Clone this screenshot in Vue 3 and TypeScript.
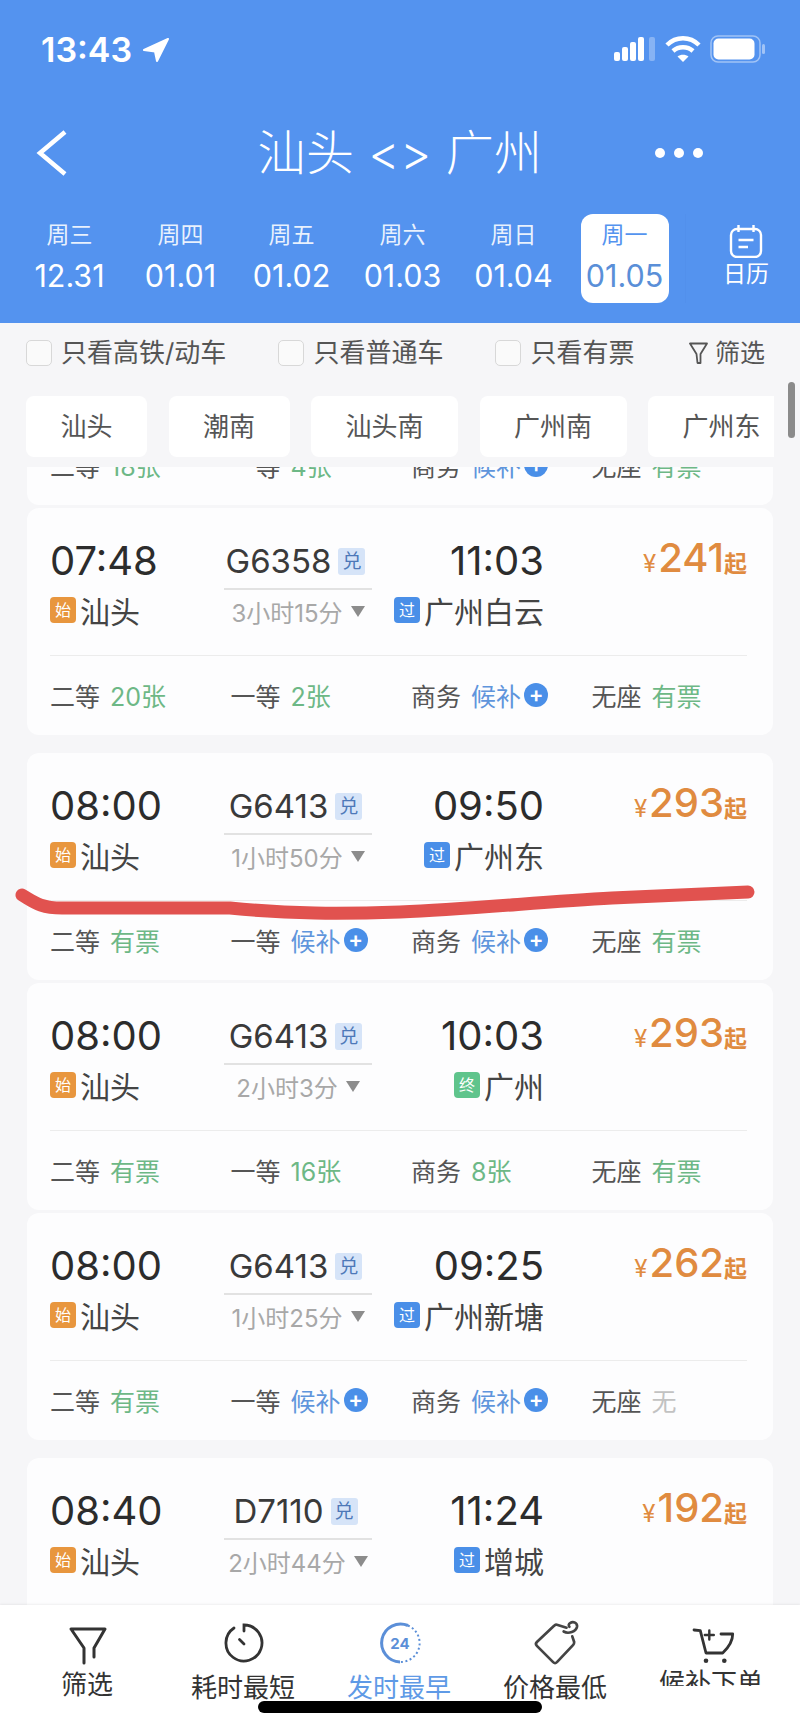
<template>
  <div class="page">
    <!-- Header -->
    <header class="header">
      <div class="status">
        <div class="clock">
          <span>13:43</span>
          <svg width="29" height="26" viewBox="0 0 29 26"><path d="M27 2 L3 13 L14 14.5 L16 24 Z" fill="#fff" stroke="#fff" stroke-width="2" stroke-linejoin="round" /></svg>
        </div>
        <div class="status-icons">
          <svg width="42" height="24" viewBox="0 0 42 24">
            <rect x="0" y="15" width="6" height="9" rx="2" fill="#fff" />
            <rect x="8" y="10" width="6" height="14" rx="2" fill="#fff" />
            <rect x="16" y="5" width="6" height="19" rx="2" fill="#fff" />
            <rect x="24" y="0" width="6" height="24" rx="2" fill="#fff" />
            <rect x="35" y="0" width="6" height="24" rx="2" fill="#fff" opacity="0.3" />
          </svg>
          <svg width="36" height="28" viewBox="0 0 36 28" fill="none" stroke="#fff" stroke-width="4.5">
            <path d="M2 10 C11 1 25 1 34 10" />
            <path d="M8 16 C13.5 11 22.5 11 28 16" />
            <path d="M18 27 L12.5 21.5 C15.5 19 20.5 19 23.5 21.5 Z" fill="#fff" stroke="none" />
          </svg>
          <svg width="56" height="28" viewBox="0 0 56 28">
            <rect x="1" y="1" width="49" height="26" rx="7" fill="none" stroke="#fff" stroke-opacity="0.45" stroke-width="1.5" />
            <rect x="3.5" y="3.5" width="41" height="21" rx="5" fill="#fff" />
            <rect x="52" y="9" width="3" height="10" rx="1.5" fill="#fff" opacity="0.45" />
          </svg>
        </div>
      </div>

      <nav class="nav">
        <svg class="back" width="32" height="46" viewBox="0 0 32 46" fill="none" stroke="#fff" stroke-width="4.5"><path d="M29 2 L4 23 L29 44" /></svg>
        <h1 class="title">汕头 &lt;&gt; 广州</h1>
        <div class="dots"><i /><i /><i /></div>
      </nav>

      <div class="dates">
        <div v-for="d in dates" :key="d.date" :class="['date', { active: d.active }]">
          <span class="week">{{ d.week }}</span>
          <span class="day">{{ d.date }}</span>
        </div>
        <div class="calendar">
          <svg width="34" height="33" viewBox="0 0 34 33" fill="none" stroke="#fff" stroke-width="2.4">
            <rect x="2" y="4" width="30" height="28" rx="6" />
            <path d="M9.5 0 V7 M24.5 0 V7 M9.5 15 H24.5 M9.5 22 H19" />
          </svg>
          <span>日历</span>
        </div>
      </div>
    </header>

    <!-- Filters -->
    <div class="filters">
      <label v-for="f in filters" :key="f" class="check"><i class="box" />{{ f }}</label>
      <div class="filter-btn">
        <svg width="19" height="23" viewBox="0 0 19 23" fill="none" stroke="#555" stroke-width="1.8"><path d="M1 1.5 H18 L11.5 12 V21 H8.5 L7.5 12 Z" stroke-linejoin="round" /></svg>
        <span>筛选</span>
      </div>
    </div>

    <div class="chips">
      <span v-for="c in chips" :key="c" class="chip">{{ c }}</span>
    </div>

    <!-- Train list -->
    <main class="list">
      <section class="card stub">
        <div class="seats">
          <div v-for="s in stubSeats" :key="s.name" class="seat">
            <span class="seat-name">{{ s.name }}</span>
            <span :class="['seat-val', s.tone]">{{ s.value }}</span>
            <i v-if="s.tone === 'wait'" class="plus">+</i>
          </div>
        </div>
      </section>

      <section v-for="t in trains" :key="t.id" :class="['card', { spaced: t.spaced }]">
        <div class="top">
          <div class="side">
            <div class="time">{{ t.dep }}</div>
            <div class="station"><i class="tag start">始</i>汕头</div>
          </div>
          <div class="mid">
            <div class="train"><span>{{ t.no }}</span><i class="swap">兑</i></div>
            <div class="line" />
            <div class="duration">{{ t.dur }}<i class="caret" /></div>
          </div>
          <div class="side right">
            <div class="time">{{ t.arr }}</div>
            <div class="station"><i :class="['tag', t.kind]">{{ t.kind === 'end' ? '终' : '过' }}</i>{{ t.to }}</div>
          </div>
          <div class="price"><small>¥</small><b>{{ t.price }}</b><em>起</em></div>
        </div>
        <div class="rule" />
        <div class="seats">
          <div v-for="s in t.seats" :key="s.name" class="seat">
            <span class="seat-name">{{ s.name }}</span>
            <span :class="['seat-val', s.tone]">{{ s.value }}</span>
            <i v-if="s.tone === 'wait'" class="plus">+</i>
          </div>
        </div>
      </section>
    </main>

    <!-- Marker stroke drawn over the screenshot -->
    <svg class="marker" width="800" height="40" viewBox="0 0 800 40" fill="none">
      <path d="M22 14 C34 21 40 27 62 27 L230 27 C290 33 340 33 400 31 C470 28 540 21 612 17 L748 11" stroke="#e1524f" stroke-width="13" stroke-linecap="round" stroke-linejoin="round" />
    </svg>

    <i class="scrollbar" />

    <!-- Bottom bar -->
    <footer class="bar">
      <div class="bar-item">
        <svg width="44" height="44" viewBox="0 0 44 44" fill="none" stroke="#333" stroke-width="3" stroke-linejoin="round" stroke-linecap="round">
          <path d="M5 8 H39 L28 27 V36 M5 8 L18 27 V42" />
        </svg>
        <span class="bar-label raised">筛选</span>
      </div>
      <div class="bar-item">
        <svg width="44" height="44" viewBox="0 0 44 44" fill="none" stroke="#333" stroke-width="2.8" stroke-linecap="round">
          <path d="M22 10 V4 A18 18 0 1 1 12 7" />
          <path d="M17.500 18.500 L22 23" />
        </svg>
        <span class="bar-label">耗时最短</span>
      </div>
      <div class="bar-item">
        <svg width="44" height="44" viewBox="0 0 44 44" fill="none" stroke="#5b8fd8" stroke-width="3">
          <path d="M30 4.500 A19 19 0 1 0 22 41" />
          <path d="M30 4.500 A19 19 0 0 1 22 41" stroke-dasharray="2 2.500" stroke-width="2" />
          <text x="22" y="28" text-anchor="middle" class="ring-text">24</text>
        </svg>
        <span class="bar-label current">发时最早</span>
      </div>
      <div class="bar-item">
        <svg width="46" height="46" viewBox="0 0 46 46" fill="none" stroke="#444" stroke-width="2.800" stroke-linejoin="round" stroke-linecap="round">
          <path d="M34 7 L24 4 Q23 3.500 21 5 L3 22 Q1 24 3 26 L20 43 Q22 45 24 43 L41 25 Q42 24 42 22 L40 16" />
          <path d="M31 11 C36 14 44 11 45 6 C45.500 2 41 0 38 2 C36 3 36 5 37 6" />
        </svg>
        <span class="bar-label">价格最低</span>
      </div>
      <div class="bar-item">
        <svg width="44" height="44" viewBox="0 0 44 44" fill="none" stroke="#333" stroke-width="2.800" stroke-linejoin="round" stroke-linecap="round">
          <path d="M4 9 L10.300 9.700 L16 32 H32.700 C38 27 42.700 20 42.700 13 H31" />
          <path d="M19.300 9.500 V18.500 M14.800 14 H23.800" stroke-width="2.400" />
          <circle cx="16" cy="39.700" r="2.300" fill="#333" stroke="none" />
          <circle cx="34.300" cy="39.700" r="2.300" fill="#333" stroke="none" />
        </svg>
        <span class="bar-label torn">候补下单</span>
      </div>
    </footer>
    <i class="home" />
  </div>
</template>

<script setup lang="ts">
type Tone = 'ok' | 'wait' | 'none'

interface Seat {
  name: string
  value: string
  tone: Tone
}

interface Train {
  id: number
  dep: string
  arr: string
  no: string
  dur: string
  to: string
  kind: 'pass' | 'end'
  price: number
  spaced: boolean
  seats: Seat[]
}

const dates = [
  { week: '周三', date: '12.31' },
  { week: '周四', date: '01.01' },
  { week: '周五', date: '01.02' },
  { week: '周六', date: '01.03' },
  { week: '周日', date: '01.04' },
  { week: '周一', date: '01.05', active: true }
]

const filters = ['只看高铁/动车', '只看普通车', '只看有票']
const chips = ['汕头', '潮南', '汕头南', '广州南', '广州东']

const seats = (a: string, b: string, c: string, d: string): Seat[] => {
  const make = (name: string, value: string): Seat => ({
    name,
    value,
    tone: value === '候补' ? 'wait' : value === '无' ? 'none' : 'ok'
  })
  return [make('二等', a), make('一等', b), make('商务', c), make('无座', d)]
}

const stubSeats = seats('18张', '4张', '候补', '有票')

const trains: Train[] = [
  { id: 1, dep: '07:48', arr: '11:03', no: 'G6358', dur: '3小时15分', to: '广州白云', kind: 'pass', price: 241, spaced: false, seats: seats('20张', '2张', '候补', '有票') },
  { id: 2, dep: '08:00', arr: '09:50', no: 'G6413', dur: '1小时50分', to: '广州东', kind: 'pass', price: 293, spaced: true, seats: seats('有票', '候补', '候补', '有票') },
  { id: 3, dep: '08:00', arr: '10:03', no: 'G6413', dur: '2小时3分', to: '广州', kind: 'end', price: 293, spaced: false, seats: seats('有票', '16张', '8张', '有票') },
  { id: 4, dep: '08:00', arr: '09:25', no: 'G6413', dur: '1小时25分', to: '广州新塘', kind: 'pass', price: 262, spaced: false, seats: seats('有票', '候补', '候补', '无') },
  { id: 5, dep: '08:40', arr: '11:24', no: 'D7110', dur: '2小时44分', to: '增城', kind: 'pass', price: 192, spaced: true, seats: [] }
]
</script>

<style>
html,
body {
  margin: 0;
  background: #f6f6f8;
}
</style>

<style scoped>
.page {
  position: relative;
  width: 800px;
  height: 1733px;
  overflow: hidden;
  background: #f6f6f8;
  font-family: Inter, "Noto Sans CJK SC", sans-serif;
  color: #333;
}

i {
  font-style: normal;
}

/* Header */
.header {
  height: 323px;
  background: #5493ef;
  color: #fff;
}

.status {
  height: 100px;
  display: flex;
  justify-content: space-between;
  align-items: flex-start;
  padding: 30px 34px 0 41px;
  box-sizing: border-box;
}

.clock {
  display: flex;
  align-items: center;
  gap: 9px;
  font-size: 34px;
  font-weight: 600;
  line-height: 39px;
}

.status-icons {
  display: flex;
  align-items: center;
  gap: 9px;
  margin-top: 5px;
}

.nav {
  height: 105px;
  display: grid;
  grid-template-columns: 1fr auto 1fr;
  align-items: center;
  padding: 0 36px;
}

.title {
  margin: 0;
  font-size: 48px;
  font-weight: 300;
  line-height: 60px;
  letter-spacing: 0.4px;
  white-space: nowrap;
}

.dots {
  display: flex;
  justify-content: flex-end;
  gap: 9px;
  margin-right: 61px;
}

.dots i {
  width: 10px;
  height: 10px;
  border-radius: 50%;
  background: #fff;
}

.dates {
  display: flex;
  height: 89px;
  margin-top: 9px;
  padding-left: 14px;
}

.date {
  width: 111px;
  display: flex;
  flex-direction: column;
  align-items: center;
  padding-top: 7px;
  box-sizing: border-box;
}

.date.active {
  width: 88px;
  margin: 0 11.5px;
  background: #fff;
  border-radius: 12px;
}

.week {
  font-size: 23px;
  line-height: 28px;
  color: rgba(255, 255, 255, 0.88);
}

.day {
  margin-top: 7px;
  font-size: 30.5px;
  line-height: 40px;
}

.active .week {
  color: #5493ef;
}

.active .day {
  color: #5a8fd8;
}

.calendar {
  flex: 1;
  display: flex;
  flex-direction: column;
  align-items: center;
  margin-left: 6px;
  padding: 11px 0 0 6px;
  box-shadow: -1px 0 0 rgba(60, 110, 200, 0.08);
  font-size: 23px;
  line-height: 28px;
  gap: 2px;
}

/* Filters */
.filters {
  height: 60px;
  display: flex;
  align-items: center;
  padding-left: 26px;
  font-size: 26px;
  color: #555;
}

.check {
  display: flex;
  align-items: center;
  gap: 9px;
  margin-right: 52px;
  padding-bottom: 1px;
}

.check,
.filter-btn {
  line-height: 34px;
}

.box {
  width: 24px;
  height: 24px;
  border: 1.5px solid #d8d8d8;
  border-radius: 5px;
  background: #fafafa;
}

.filter-btn {
  display: flex;
  align-items: center;
  gap: 7px;
  margin-left: auto;
  padding-right: 35px;
  font-size: 25px;
}

.chips {
  width: 774px;
  display: flex;
  gap: 21.5px;
  margin-top: 13px;
  padding-left: 26px;
  box-sizing: border-box;
  overflow: hidden;
}

.chip {
  flex: none;
  height: 61px;
  padding: 0 34.5px 5px;
  box-sizing: border-box;
  display: flex;
  align-items: center;
  background: #fff;
  border-radius: 8px;
  font-size: 26px;
  color: #555;
}

/* List */
.list {
  height: 1138px;
  margin-top: 10px;
  overflow: hidden;
}

.card {
  height: 227px;
  margin: 3px 27px 0;
  padding: 27px 26px 0 23px;
  box-sizing: border-box;
  background: #fdfdfe;
  border-radius: 12px;
}

.card.spaced {
  margin-top: 18px;
}

.card.stub {
  display: flow-root;
  height: 38px;
  margin-top: 0;
  padding-top: 0;
  border-radius: 0 0 12px 12px;
}

.stub .seats {
  margin-top: -25px;
}

.top {
  display: flex;
}

.side {
  width: 174px;
}

.side.right {
  width: 172px;
  text-align: right;
}

.time {
  height: 52px;
  font-size: 40px;
  line-height: 52px;
  color: #2c2c2c;
}

.station {
  height: 52px;
  padding-bottom: 7px;
  box-sizing: border-box;
  display: flex;
  align-items: center;
  font-size: 30px;
  color: #444;
}

.right .station {
  justify-content: flex-end;
}

.tag {
  width: 26px;
  height: 26px;
  margin-right: 4px;
  border-radius: 4px;
  text-align: center;
  font-size: 16px;
  line-height: 26px;
  color: #fff;
}

.tag.start {
  background: #e8963e;
}

.tag.pass {
  background: #4a8fe8;
}

.tag.end {
  background: #5fc48c;
}

.mid {
  width: 148px;
  display: flex;
  flex-direction: column;
  align-items: center;
}

.train {
  height: 52px;
  display: flex;
  align-items: center;
  gap: 7px;
  margin-left: -5px;
  font-size: 33px;
  color: #3a3a3a;
  white-space: nowrap;
}

.swap {
  width: 27px;
  height: 27px;
  background: #d6e4f8;
  border-radius: 3px;
  text-align: center;
  font-size: 19px;
  line-height: 27px;
  color: #4d78b8;
}

.line {
  width: 148px;
  height: 2px;
  margin-top: 1px;
  background: #e2e2e2;
}

.duration {
  height: 48px;
  padding-bottom: 6px;
  box-sizing: border-box;
  display: flex;
  align-items: center;
  gap: 8px;
  font-size: 24px;
  color: #a8a8a8;
  white-space: nowrap;
}

.caret {
  width: 0;
  height: 0;
  border: 7px solid transparent;
  border-top: 11px solid #8c8c8c;
  border-bottom: 0;
}

.price {
  flex: 1;
  display: flex;
  justify-content: flex-end;
  align-items: baseline;
  height: 52px;
  color: #e08b40;
  line-height: 46px;
}

.price small {
  margin-right: 2px;
  font-size: 24px;
}

.price b {
  font-size: 40px;
  font-weight: 500;
}

.price em {
  font-size: 23px;
  font-style: normal;
  font-weight: 700;
}

.rule {
  height: 1px;
  margin-top: 16px;
  background: #ececec;
}

.seats {
  display: grid;
  grid-template-columns: repeat(4, 180.5px);
  margin-top: 16px;
}

.seat {
  display: flex;
  align-items: center;
  gap: 10px;
  height: 50px;
  padding-bottom: 4px;
  box-sizing: border-box;
  font-size: 25px;
  color: #555;
  white-space: nowrap;
}

.seat-val.ok {
  color: #6db886;
}

.seat-val.wait {
  color: #5f95dc;
}

.seat-val.none {
  color: #c2c2c2;
}

.plus {
  width: 24px;
  height: 24px;
  margin-left: -7px;
  border-radius: 50%;
  background: #4a8fe8;
  text-align: center;
  font-size: 22px;
  font-weight: 600;
  line-height: 23px;
  color: #fff;
}

/* Overlays */
.marker {
  position: absolute;
  left: 0;
  top: 881px;
}

.scrollbar {
  position: absolute;
  left: 788px;
  top: 382px;
  width: 7px;
  height: 56px;
  border-radius: 4px;
  background: #8b8b8b;
}

/* Bottom bar */
.bar {
  height: 128px;
  display: flex;
  padding: 16px 10px 0;
  box-sizing: border-box;
  background: #fff;
  box-shadow: 0 -1px 2px rgba(0, 0, 0, 0.06);
  position: relative;
}

.bar-item {
  width: 156px;
  display: flex;
  flex-direction: column;
  align-items: center;
}

.bar-item svg {
  height: 44px;
  flex: none;
  overflow: visible;
}

.ring-text {
  fill: #5b8fd8;
  stroke: none;
  font-size: 15px;
  font-weight: 700;
}

.bar-label {
  margin-top: 6px;
  margin-right: 2px;
  font-size: 26px;
  line-height: 34px;
  color: #333;
  white-space: nowrap;
}

.bar-label.raised {
  margin-top: 3px;
}

.bar-label.current {
  color: #5f9ae6;
}

.bar-label.torn {
  height: 20px;
  margin-top: 1px;
  overflow: hidden;
}

.home {
  position: absolute;
  left: 258px;
  top: 1701px;
  width: 284px;
  height: 12px;
  border-radius: 6px;
  background: #000;
}
</style>
